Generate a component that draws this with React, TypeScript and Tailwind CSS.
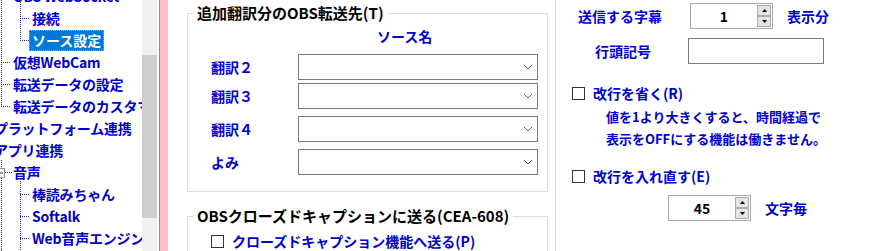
import React from 'react';

const font = "font-['Noto_Sans_CJK_JP',sans-serif]";

type Row = { level: 0 | 1 | 2; label: string; selected?: boolean };

const treeRows: Row[] = [
  { level: 1, label: 'OBS WebSocket' },
  { level: 2, label: '接続' },
  { level: 2, label: 'ソース設定', selected: true },
  { level: 1, label: '仮想WebCam' },
  { level: 1, label: '転送データの設定' },
  { level: 1, label: '転送データのカスタマイズ' },
  { level: 0, label: 'プラットフォーム連携' },
  { level: 0, label: 'アプリ連携' },
  { level: 1, label: '音声' },
  { level: 2, label: '棒読みちゃん' },
  { level: 2, label: 'Softalk' },
  { level: 2, label: 'Web音声エンジン' },
  { level: 2, label: 'VOICEVOX' },
];

const indent = { 0: 'pl-0', 1: 'pl-[19px]', 2: 'pl-[38px]' };

function TreeLines() {
  const dot = { stroke: '#24249a', strokeWidth: 1, strokeDasharray: '1 1' };
  return (
    <svg className="absolute left-0 top-0 pointer-events-none" width="142" height="251">
      <line x1="1.5" y1="0" x2="1.5" y2="107" {...dot} />
      {[62.5, 84.5, 106.5].map((y) => (
        <line key={y} x1="1" y1={y} x2="11" y2={y} {...dot} />
      ))}
      <line x1="20.5" y1="0" x2="20.5" y2="41" {...dot} />
      {[18.5, 40.5].map((y) => (
        <line key={y} x1="20" y1={y} x2="30" y2={y} {...dot} />
      ))}
      <line x1="1.5" y1="160" x2="1.5" y2="251" {...dot} />
      <line x1="5" y1="172.5" x2="12" y2="172.5" {...dot} />
      <rect x="-4.5" y="168.5" width="9" height="9" fill="#fff" stroke="#919191" />
      <line x1="-2" y1="173" x2="3" y2="173" stroke="#333" />
      <line x1="20.5" y1="181" x2="20.5" y2="251" {...dot} />
      {[194.5, 216.5, 238.5].map((y) => (
        <line key={y} x1="20" y1={y} x2="30" y2={y} {...dot} />
      ))}
    </svg>
  );
}

function Tree() {
  return (
    <div className="relative w-[142px] h-[251px] overflow-hidden bg-white shrink-0">
      <TreeLines />
      <div className="-mt-[15px] -ml-[9px]">
        {treeRows.map((r, i) => (
          <div key={i} className={`h-[22px] flex items-center whitespace-nowrap ${indent[r.level]}`}>
            {r.selected ? (
              <span className="h-[21px] px-[3px] flex items-center bg-[#0078d7] text-white outline outline-1 outline-dotted outline-[#ff9a3c] -outline-offset-1">
                {r.label}
              </span>
            ) : (
              <span className="px-[3px] text-[#0000cd] tracking-[-0.2px]">{r.label}</span>
            )}
          </div>
        ))}
      </div>
    </div>
  );
}

function Chevron() {
  return (
    <svg width="10" height="6" viewBox="0 0 10 6" className="mr-[4px]">
      <path d="M1 1 L5 5 L9 1" fill="none" stroke="#606060" strokeWidth="1" />
    </svg>
  );
}

function Combo({ label, className = '' }: { label: string; className?: string }) {
  return (
    <div className={`flex items-center ${className}`}>
      <div className="w-[110px] pl-[23px] text-[#0000cd]">{label}</div>
      <div className="w-[240px] h-[26px] border border-[#7a7a7a] bg-white flex items-center justify-end">
        <Chevron />
      </div>
    </div>
  );
}

function Checkbox({ label, className = '' }: { label: string; className?: string }) {
  return (
    <div className={`flex items-center gap-[8px] ${className}`}>
      <div className="w-[13px] h-[13px] border border-[#333] bg-white" />
      <span className="text-[#0000cd]">{label}</span>
    </div>
  );
}

function Spinner({ value }: { value: string }) {
  return (
    <div className="w-[83px] h-[26px] border border-[#a8a8a8] bg-white flex">
      <div className="flex-1 flex items-center justify-center text-black">{value}</div>
      <div className="w-[15px] flex flex-col justify-center gap-0 pr-[1px] py-[1px]">
        <div className="flex-1 border border-[#adadad] bg-[#e5e5e5] flex items-center justify-center">
          <svg width="5" height="3" viewBox="0 0 5 3"><path d="M0 3 L2.5 0 L5 3 Z" fill="#000" /></svg>
        </div>
        <div className="flex-1 border border-[#adadad] bg-[#e5e5e5] flex items-center justify-center">
          <svg width="5" height="3" viewBox="0 0 5 3"><path d="M0 0 L2.5 3 L5 0 Z" fill="#000" /></svg>
        </div>
      </div>
    </div>
  );
}

export default function App() {
  return (
    <div className={`w-[893px] h-[251px] overflow-hidden bg-white flex text-[14px] font-bold leading-[18px] ${font}`}>
      <Tree />
      <div className="w-[15px] h-full bg-[#f0f0f0] shrink-0 flex flex-col">
        <div className="h-[55px]" />
        <div className="h-[163px] bg-[#cdcdcd]" />
      </div>
      <div className="w-[2px] shrink-0" />
      <div className="w-[9px] h-full bg-[#ffc0cb] border-l border-[#8a8a8a] shrink-0" />

      <div className="flex-1 flex">
        <div className="pl-[19px] w-[380px] shrink-0">
          <fieldset className="w-[361px] border border-[#dcdcdc] mt-[4px] pb-[16px]">
            <legend className="ml-[5px] px-[4px] text-[15px] text-black">追加翻訳分のOBS転送先(T)</legend>
            <div className="pl-[189px] pt-[5px] mb-[9px] text-[#0000cd]">ソース名</div>
            <Combo label="翻訳２" />
            <Combo label="翻訳３" className="mt-[3px]" />
            <Combo label="翻訳４" className="mt-[7px]" />
            <Combo label="よみ" className="mt-[7px]" />
          </fieldset>
          <fieldset className="w-[361px] border border-[#dcdcdc] mt-[15px] pb-[20px]">
            <legend className="ml-[5px] px-[4px] text-[15px] text-black">OBSクローズドキャプションに送る(CEA-608)</legend>
            <Checkbox label="クローズドキャプション機能へ送る(P)" className="pl-[23px] pt-[7px]" />
          </fieldset>
        </div>

        <div className="w-[7px] shrink-0" />
        <div className="w-px h-full bg-[#d9d9d9] shrink-0" />

        <div className="flex-1 flex flex-col">
          <div className="flex items-center mt-[3px]">
            <div className="ml-[22px] w-[112px] text-[#0000cd]">送信する字幕</div>
            <Spinner value="1" />
            <div className="ml-[14px] text-[#0000cd]">表示分</div>
          </div>
          <div className="flex items-center mt-[9px]">
            <div className="ml-[39px] w-[93px] text-[#0000cd]">行頭記号</div>
            <div className="w-[136px] h-[26px] border border-[#7a7a7a] bg-white" />
          </div>
          <Checkbox label="改行を省く(R)" className="ml-[16px] mt-[18px] h-[22px]" />
          <div className="ml-[50px] mt-[2px] text-[13px] leading-[22px] text-[#0000cd]">
            <div>値を1より大きくすると、時間経過で</div>
            <div>表示をOFFにする機能は働きません。</div>
          </div>
          <Checkbox label="改行を入れ直す(E)" className="ml-[16px] mt-[15px] h-[22px]" />
          <div className="flex items-center mt-[8px]">
            <div className="ml-[112px]">
              <Spinner value="45" />
            </div>
            <div className="ml-[14px] text-[#0000cd]">文字毎</div>
          </div>
        </div>
      </div>
    </div>
  );
}
